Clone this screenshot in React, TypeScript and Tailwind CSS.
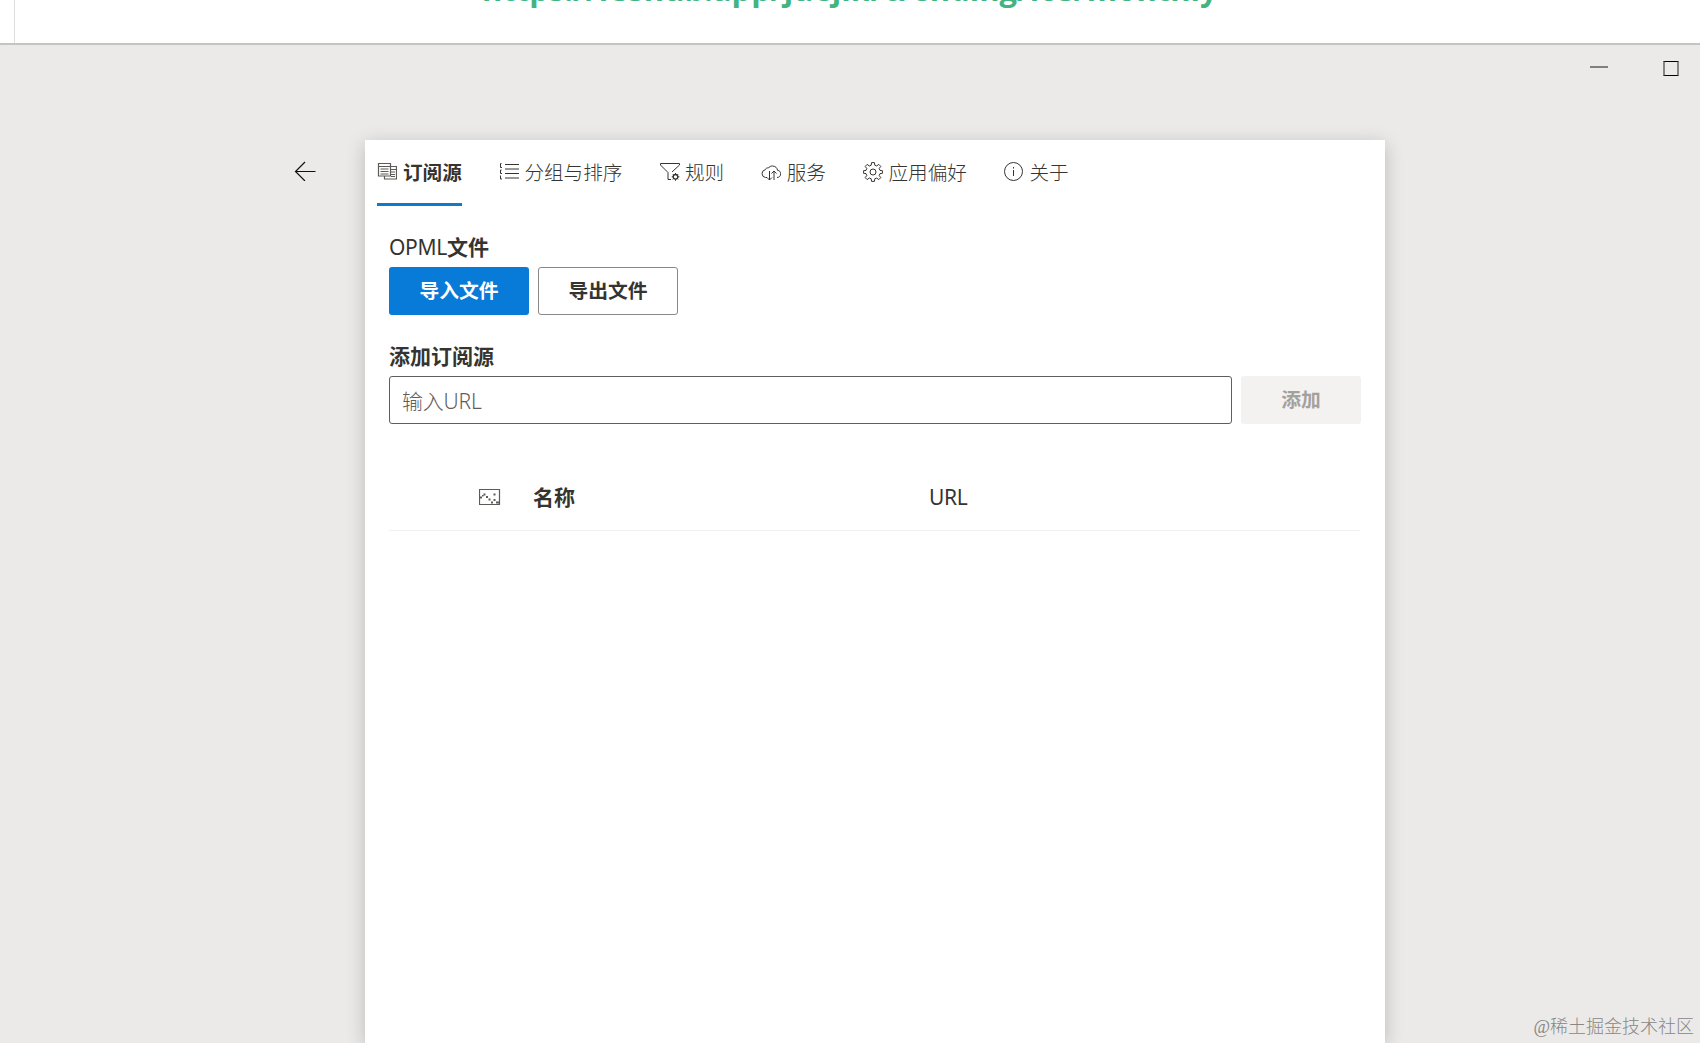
import type { ReactNode } from 'react';

type IconProps = { children: ReactNode };

function Icon({ children }: IconProps) {
  return (
    <svg
      viewBox="0 0 20 20"
      className="size-5 shrink-0"
      fill="none"
      stroke="currentColor"
      strokeWidth="1"
    >
      {children}
    </svg>
  );
}

const tabs = [
  {
    label: '订阅源',
    icon: (
      <Icon>
        <path
          d="M1.500 1.500h12v12.500h-12zM1.500 4.500h12M3.500 7h8M3.500 9.500h8M3.500 12h8M13.500 4.500h6v12.500h-12v-3M13.500 7.500h6M14 10h4M14 12.500h4M14 14.500h4"
          strokeWidth="1.200"
          stroke="#5c5b57"
        />
      </Icon>
    ),
  },
  {
    label: '分组与排序',
    icon: (
      <Icon>
        <path d="M6 2.500h14M6 7h14M6 11.500h14M6 16h14M1.500 1.500h1M1.500 1.500v4M3 5.500H1.500M1.500 8h1M1.500 8v3.500M3 11.500H1.500M1.500 13.500v3.500H3" />
      </Icon>
    ),
  },
  {
    label: '规则',
    icon: (
      <Icon>
        <path d="M12 10l7.500-7V1.500H.5V3L8 10.500v7h3" />
        <circle cx="15.500" cy="14.800" r="2.300" strokeWidth="1.300" />
        <path d="M15.500 11v1.500M15.500 17v1.700M11.800 14.800h1.500M17.700 14.800h1.700M12.900 12.200l1 1M17.100 16.400l1 1M18.100 12.200l-1 1M13.900 16.400l-1 1" />
      </Icon>
    ),
  },
  {
    label: '服务',
    icon: (
      <Icon>
        <path d="M6 15.500H4.500a3.900 3.900 0 0 1-.3-7.700C4.600 6.200 6.200 5.700 7.400 6 8.300 4.600 9.900 4 11.400 4c2.800 0 5 2 5.100 4.300 2 .2 3.200 1.600 3.200 3.500 0 2.200-1.600 3.700-3.700 3.700M8.500 9v9M6 15.500L8.500 18l2.500-2.500M13 18V9M10.500 11.500L13 9l2.500 2.500" />
      </Icon>
    ),
  },
  {
    label: '应用偏好',
    icon: (
      <Icon>
        <path d="M8.600.6h2.800l.4 2.600 1.900.8L15.800 2.400l2 2-1.600 2.100.8 1.900 2.600.4v2.400l-2.600.4-.8 1.900 1.600 2.100-2 2-2.100-1.600-1.900.8-.4 2.600H8.600l-.4-2.600-1.900-.8-2.100 1.600-2-2 1.600-2.100-.8-1.900-2.600-.4V8.800L3 8.400l.8-1.900-1.600-2.100 2-2L6.300 4l1.900-.8z" />
        <circle cx="10" cy="10" r="3" />
      </Icon>
    ),
  },
  {
    label: '关于',
    icon: (
      <Icon>
        <circle cx="9.500" cy="9.500" r="9" />
        <path d="M9.500 8v6M9.500 5v1.500" />
      </Icon>
    ),
  },
];

function Tabs() {
  return (
    <nav className="flex h-[66px] gap-[37.300px] pl-3 text-[19.600px] text-[#353430]">
      {tabs.map((tab, index) => (
        <button
          key={tab.label}
          type="button"
          className={
            index === 0
              ? 'flex items-start gap-[6px] border-b-[3px] border-[#0f7acb] pt-[22px] font-bold'
              : 'flex items-start gap-[5.300px] pt-[22px] font-light'
          }
        >
          {tab.icon}
          <span className="-mt-px leading-6">{tab.label}</span>
        </button>
      ))}
    </nav>
  );
}

function TitleBar() {
  return (
    <div className="flex h-[95px] shrink-0 items-start justify-end gap-[55px] pr-[21px] pt-4">
      <div className="mt-[5px] h-0.5 w-[18px] bg-[#80807f]" />
      <div className="h-[15px] w-4 border-x-2 border-y border-x-[#858584] border-y-black" />
    </div>
  );
}

export default function App() {
  return (
    <div className="relative flex h-[1043px] w-[1700px] flex-col overflow-hidden bg-[#ebeae8] font-['Noto_Sans','Noto_Sans_CJK_SC',sans-serif] text-[#353430]">
      <header className="flex h-[45px] shrink-0 border-b-2 border-[#c4c4c0] bg-white pl-[14px]">
        <div className="flex flex-1 items-end overflow-hidden border-l border-[#dededc] pl-[467px]">
          <span className="mb-[34px] whitespace-nowrap font-['Open_Sans',sans-serif] text-[31px] font-bold leading-10 text-[#42b482]">
            https://rsshub.app/juejin/trending/ios/monthly
          </span>
        </div>
      </header>

      <TitleBar />

      <div className="flex min-h-0 flex-1">
        <div className="flex w-[365px] shrink-0 items-start justify-end pr-[49px] pt-[21px]">
          <svg viewBox="0 0 22 20" className="h-5 w-[22px]" fill="none" stroke="#111" strokeWidth="1.200">
            <path d="M21.500 10.500H1.500M11 1l-9.500 9.500L11 20" />
          </svg>
        </div>

        <main className="w-[1020px] shrink-0 bg-white shadow-[0_4px_18px_rgba(0,0,0,0.2)]">
          <Tabs />

          <section className="px-6 pt-[26px]">
            <h2 className="h-[35px] text-[21px] leading-[30px]">
              <span className="tracking-[-0.300px]">OPML</span>
              <span className="font-bold">文件</span>
            </h2>
            <div className="flex gap-[9px] text-[19.800px] font-bold">
              <button type="button" className="h-12 w-[140px] rounded-[3px] bg-[#087ad7] text-white">
                导入文件
              </button>
              <button type="button" className="h-12 w-[140px] rounded-[3px] border border-[#8a8886]">
                导出文件
              </button>
            </div>

            <h2 className="mt-[26px] h-[35px] text-[21px] font-bold leading-[30px]">添加订阅源</h2>
            <div className="flex gap-[9px]">
              <input
                placeholder="输入URL"
                className="h-12 w-[843px] rounded-[3px] border border-[#605e5c] px-3 pt-px text-[21px] font-light tracking-[-0.200px] placeholder:text-[#5f5e5b]"
              />
              <button
                type="button"
                disabled
                className="h-12 w-[120px] rounded-[3px] bg-[#f3f2f0] text-[19.800px] font-bold text-[#a3a19e]"
              >
                添加
              </button>
            </div>

            <div className="mt-[41px] flex h-[66px] w-[971px] items-center border-b border-[#f1f1ef] text-[21px]">
              <svg
                viewBox="0 0 22 17"
                className="ml-[90px] h-[17px] w-[22px]"
                fill="none"
                stroke="#5c5b58"
              >
                <path d="M.5.5h20v15H.5z" strokeWidth="1.200" />
                <path
                  d="M1 7.500h2v2H1zM3 6h1.500v1.500H3zM4.500 4.500h2v2h-2zM7 7h2v2H7zM9.500 9.500h2v2h-2zM12 12.500h2v2h-2zM14.500 10h2v2h-2zM17 12.500h3v2h-3zM14.500 4.500h2v2h-2z"
                  fill="#5c5b58"
                  stroke="none"
                />
              </svg>
              <span className="ml-8 w-[396px] font-bold">名称</span>
              <span className="tracking-[-0.300px]">URL</span>
            </div>
          </section>
        </main>
      </div>

      <div className="absolute bottom-0.5 right-[6px] font-['Liberation_Serif','Noto_Sans_CJK_SC',serif] text-[18px] font-light leading-7 text-[#888785]">
        @稀土掘金技术社区
      </div>
    </div>
  );
}
